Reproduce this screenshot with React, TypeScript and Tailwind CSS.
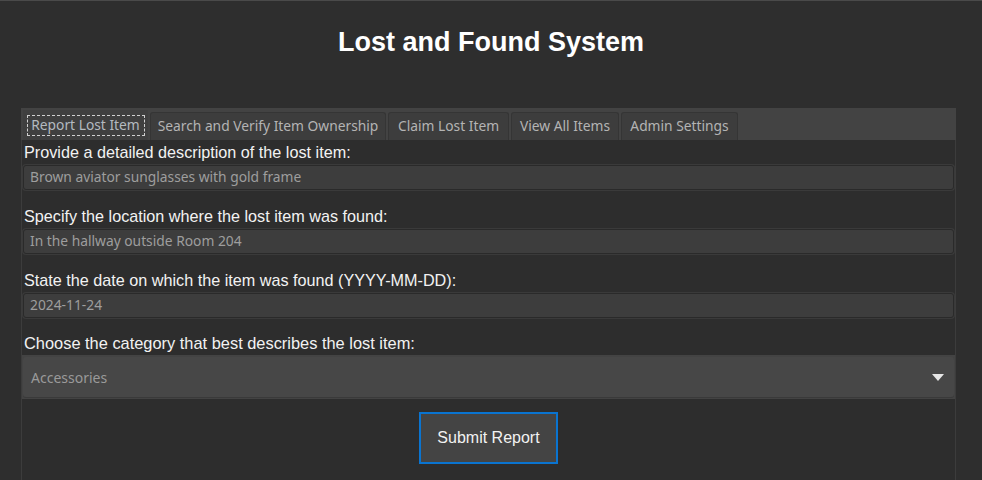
import React from "react";

const tabs = [
  { label: "Report Lost Item", w: 125, selected: true },
  { label: "Search and Verify Item Ownership", w: 236 },
  { label: "Claim Lost Item", w: 121 },
  { label: "View All Items", w: 108 },
  { label: "Admin Settings", w: 117 },
];

const sans = '"Liberation Sans", Arial, sans-serif';
const ui = '"Noto Sans", "Open Sans", sans-serif';

function Field({ label, value }: { label: string; value: string }) {
  return (
    <div className="flex flex-col">
      <div className="h-[24px] flex items-center pl-[2px] text-[16.2px] text-[#f2f2f2] whitespace-nowrap" style={{ fontFamily: sans }}>
        {label}
      </div>
      <div className="mx-[1px] mt-[1px] h-[25px] rounded-[3px] border border-[#2a2a2a] bg-[#3d3d3d] shadow-[0_0_0_1px_#3a3a3a] flex items-center pl-[6px] text-[13.8px] text-[#9e9e9e] whitespace-nowrap" style={{ fontFamily: ui }}>
        {value}
      </div>
    </div>
  );
}

export default function App() {
  return (
    <div className="w-[982px] h-[480px] bg-[#2e2e2e] border-t border-[#4a4a4a] overflow-hidden">
      <div className="h-[107px] flex justify-center pt-[25px]">
        <h1 className="text-[27px] font-bold text-white leading-[32px]" style={{ fontFamily: sans }}>
          Lost and Found System
        </h1>
      </div>
      <div className="ml-[21px] w-[935px]">
        <div className="h-[32px] bg-[#434343] flex items-end gap-[2px] pl-[2px]" style={{ fontFamily: ui }}>
          {tabs.map((t) =>
            t.selected ? (
              <div key={t.label} className="h-[30px] bg-[#3f3f3f] flex items-center justify-center shrink-0" style={{ width: t.w }}>
                <div className="border border-dashed border-[#d0d0d0] h-[21px] w-[118px] flex items-center justify-center text-[13.8px] text-[#b4bac0] whitespace-nowrap">
                  {t.label}
                </div>
              </div>
            ) : (
              <div key={t.label} className="h-[28px] bg-[#3d3d3d] border border-[#353535] border-b-0 rounded-t-[3px] flex items-center justify-center text-[13.8px] text-[#b4b4b4] shrink-0 whitespace-nowrap" style={{ width: t.w }}>
                {t.label}
              </div>
            )
          )}
        </div>
        <div className="h-[340px] bg-[#2d2d2d] border-x border-[#3c3c3c] flex flex-col">
          <div className="flex flex-col gap-[14px]">
            <Field label="Provide a detailed description of the lost item:" value="Brown aviator sunglasses with gold frame" />
            <Field label="Specify the location where the lost item was found:" value="In the hallway outside Room 204" />
            <Field label="State the date on which the item was found (YYYY-MM-DD):" value="2024-11-24" />
          </div>
          <div className="mt-[13px] h-[24px] flex items-center pl-[2px] text-[16.4px] text-[#f2f2f2] whitespace-nowrap" style={{ fontFamily: sans }}>
            Choose the category that best describes the lost item:
          </div>
          <div className="h-[44px] bg-[#434343] px-[1px] py-[2px]">
            <div className="h-full rounded-[3px] bg-[#474747] shadow-[0_1px_0_#3a3a3a] flex items-center justify-between pl-[8px] pr-[10px]">
              <span className="text-[14px] text-[#9a9a9a]" style={{ fontFamily: ui }}>Accessories</span>
              <svg width="12" height="7" viewBox="0 0 12 7">
                <polygon points="0,0 12,0 6,7" fill="#e6e6e6" />
              </svg>
            </div>
          </div>
          <div className="flex justify-center mt-[13px]">
            <button className="w-[139px] h-[52px] bg-[#444444] border-2 border-[#0a74d0] text-[16px] text-[#f2f2f2]" style={{ fontFamily: sans }}>
              Submit Report
            </button>
          </div>
        </div>
      </div>
    </div>
  );
}
